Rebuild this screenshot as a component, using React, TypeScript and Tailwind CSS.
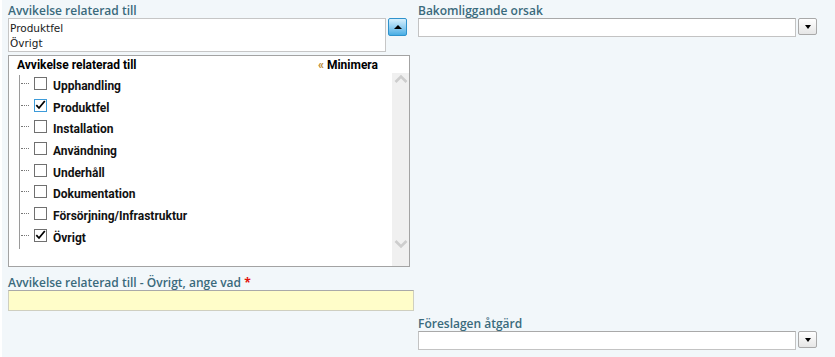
import React from "react";

// Träd-alternativ för "Avvikelse relaterad till"
const options = [
  { label: "Upphandling", checked: false },
  { label: "Produktfel", checked: true, focused: true },
  { label: "Installation", checked: false },
  { label: "Användning", checked: false },
  { label: "Underhåll", checked: false },
  { label: "Dokumentation", checked: false },
  { label: "Försörjning/Infrastruktur", checked: false },
  { label: "Övrigt", checked: true },
];

const FieldLabel = ({ children }: { children: React.ReactNode }) => (
  <div className="h-[15px] leading-[15px] text-[12px] font-semibold text-[#3a6a7c] whitespace-nowrap">
    {children}
  </div>
);

const DropButton = () => (
  <button className="w-[19px] h-[17px] rounded-[2px] border border-[#a9a9a9] bg-gradient-to-b from-white to-[#e6e6e6] flex items-center justify-center">
    <span className="w-0 h-0 border-l-[3.5px] border-r-[3.5px] border-t-[4px] border-l-transparent border-r-transparent border-t-black" />
  </button>
);

const Checkbox = ({ checked, focused }: { checked: boolean; focused?: boolean }) => (
  <div
    className={`relative mt-[2px] w-[13px] h-[13px] shrink-0 bg-white border ${
      focused ? "border-[#3d9bd9]" : "border-[#707070]"
    }`}
  >
    {checked && (
      <svg viewBox="0 0 13 13" className="absolute -left-px -top-[2px] w-[13px] h-[13px]">
        <path d="M2.3 7.2 L5 10 L10.8 3" fill="none" stroke="#000" strokeWidth="1.8" />
      </svg>
    )}
  </div>
);

const Chevron = ({ up }: { up?: boolean }) => (
  <svg viewBox="0 0 14 10" className="w-[14px] h-[10px]">
    <path
      d={up ? "M1.5 8 L7 2.5 L12.5 8" : "M1.5 2 L7 7.5 L12.5 2"}
      fill="none"
      stroke="#cdcdcd"
      strokeWidth="2.6"
    />
  </svg>
);

export default function App() {
  return (
    <div className="w-[835px] min-h-[357px] bg-[#f2f7fa] border-l-2 border-white pl-[6px] pt-[3px] font-['Open_Sans',sans-serif]">
      <div className="grid grid-cols-[406px_400px] gap-x-[4px]">
        {/* Rad 1, vänster: avvikelse relaterad till */}
        <div>
          <FieldLabel>Avvikelse relaterad till</FieldLabel>
          <div className="flex items-start gap-[2px]">
            <div className="w-[378px] h-[34px] bg-white border border-[#c6c6c6] pl-[1px] pt-[2px] font-['DejaVu_Sans',sans-serif] text-[10.5px] leading-[15px] text-[#1a1a1a]">
              <div>Produktfel</div>
              <div>Övrigt</div>
            </div>
            <button className="w-[19px] h-[18px] rounded-[2px] border border-[#2f92cc] bg-gradient-to-b from-[#d6f0fd] to-[#47aee4] flex items-center justify-center">
              <span className="w-0 h-0 border-l-[4px] border-r-[4px] border-b-[4px] border-l-transparent border-r-transparent border-b-black" />
            </button>
          </div>

          <div className="mt-[3px] w-[402px] h-[212px] border border-[#a3a3a3] bg-white flex flex-col font-['Roboto',sans-serif]">
            <div className="h-[17px] flex items-end justify-between pl-[8px] pr-[31px] text-[12px] font-bold text-black leading-[15px]">
              <span>Avvikelse relaterad till</span>
              <span className="flex items-center gap-[3px]">
                <span className="text-[12px] leading-[15px] text-[#b8862a]">«</span>
                Minimera
              </span>
            </div>
            <div className="flex flex-1">
              <div className="flex-1 pt-[2px] pl-[10px]">
                {options.map((o) => (
                  <div key={o.label} className="flex items-start h-[21.7px]">
                    <div className="w-[15px] h-full border-l border-[#9a9a9a] pt-[8px] pl-[1px]">
                      <div className="w-[8px] border-t border-dotted border-[#777]" />
                    </div>
                    <Checkbox checked={o.checked} focused={o.focused} />
                    <span className="ml-[6px] text-[12px] font-bold text-[#111] leading-[22px]">
                      {o.label}
                    </span>
                  </div>
                ))}
              </div>
              <div className="w-[17px] bg-[#f0f0f0] flex flex-col items-center justify-between pt-[1px] pb-[17px]">
                <Chevron up />
                <Chevron />
              </div>
            </div>
          </div>
        </div>

        {/* Rad 1, höger: bakomliggande orsak */}
        <div>
          <FieldLabel>Bakomliggande orsak</FieldLabel>
          <div className="flex items-start gap-[2px]">
            <div className="w-[378px] h-[19px] bg-white border border-[#c3c3c3] border-t-[#a9a9a9]" />
            <DropButton />
          </div>
        </div>

        {/* Rad 2, vänster: övrigt */}
        <div className="mt-[8px]">
          <FieldLabel>
            Avvikelse relaterad till - Övrigt, ange vad <span className="text-[#e3120b] font-bold">*</span>
          </FieldLabel>
          <div className="w-[406px] h-[21px] bg-[#fffdc9] border border-[#cfcfc0] border-t-[#a9a9a9]" />
        </div>
        <div />

        {/* Rad 3, höger: föreslagen åtgärd */}
        <div />
        <div className="mt-[5px]">
          <FieldLabel>Föreslagen åtgärd</FieldLabel>
          <div className="flex items-start gap-[2px]">
            <div className="w-[378px] h-[19px] bg-white border border-[#c3c3c3] border-t-[#a9a9a9]" />
            <DropButton />
          </div>
        </div>
      </div>
    </div>
  );
}
